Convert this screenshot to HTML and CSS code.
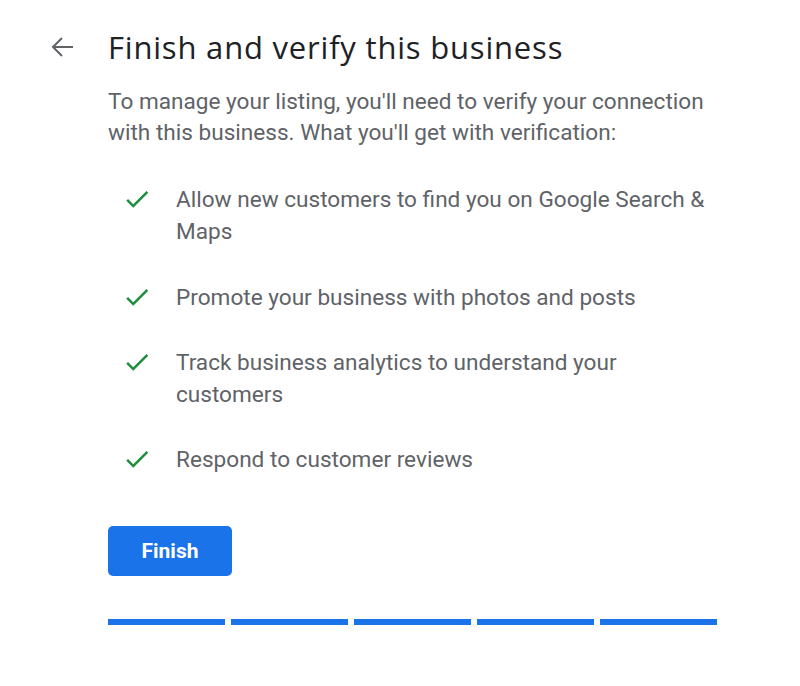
FILE: index.html
```html
<!DOCTYPE html>
<html>
<head>
<meta charset="utf-8">
<link rel="stylesheet" href="styles.css">
</head>
<body>
<div class="page">
  <div class="header">
    <svg class="back" width="24" height="22" viewBox="0 0 24 22"><path d="M22 11H2.5M11 2L2 11l9 9" fill="none" stroke="#5f6368" stroke-width="2"/></svg>
    <h1 class="title">Finish and verify this business</h1>
  </div>
  <div class="content">
    <p class="intro">To manage your listing, you'll need to verify your connection with this business. What you'll get with verification:</p>
    <ul class="benefits">
      <li class="benefit"><svg class="check" width="30" height="30" viewBox="0 0 24 24"><path d="M9 16.17L4.83 12l-1.42 1.41L9 19 21 7l-1.41-1.41z" fill="#1e8e3e"/></svg><span>Allow new customers to find you on Google Search &amp; Maps</span></li>
      <li class="benefit"><svg class="check" width="30" height="30" viewBox="0 0 24 24"><path d="M9 16.17L4.83 12l-1.42 1.41L9 19 21 7l-1.41-1.41z" fill="#1e8e3e"/></svg><span>Promote your business with photos and posts</span></li>
      <li class="benefit"><svg class="check" width="30" height="30" viewBox="0 0 24 24"><path d="M9 16.17L4.83 12l-1.42 1.41L9 19 21 7l-1.41-1.41z" fill="#1e8e3e"/></svg><span>Track business analytics to understand your customers</span></li>
      <li class="benefit"><svg class="check" width="30" height="30" viewBox="0 0 24 24"><path d="M9 16.17L4.83 12l-1.42 1.41L9 19 21 7l-1.41-1.41z" fill="#1e8e3e"/></svg><span>Respond to customer reviews</span></li>
    </ul>
    <button class="finish">Finish</button>
    <div class="progress">
      <div class="seg"></div><div class="seg"></div><div class="seg"></div><div class="seg"></div><div class="seg"></div>
    </div>
  </div>
</div>
</body>
</html>
```
FILE: styles.css
```css
html, body { margin: 0; padding: 0; background: #fff; }
body { font-family: Roboto, "Noto Sans", sans-serif; }
.page { padding: 28px 0 0 0; }
.header { display: flex; align-items: center; }
.back { margin-left: 51px; flex: none; }
.title { margin: 0 0 0 33px; font-family: "Open Sans", Roboto, sans-serif; font-weight: 400; font-size: 31px; line-height: 38px; color: #202124; letter-spacing: 0.8px; white-space: nowrap; }
.content { margin-left: 108px; width: 612px; }
.intro { margin: 20px 0 0 0; font-size: 22.6px; line-height: 31px; color: #5f6368; }
.benefits { list-style: none; margin: 36px 0 0 0; padding: 0; }
.benefit { display: flex; align-items: flex-start; color: #5f6368; font-size: 22.6px; line-height: 32px; margin-bottom: 33px; }
.benefit:first-child { margin-bottom: 34px; }
.benefit:last-child { margin-bottom: 0; }
.benefit .check { flex: none; margin: 0 24px 0 14px; }
.benefit span { flex: 1; }
.finish { display: block; margin-top: 50px; width: 124px; height: 50px; border: none; border-radius: 5px; background: #1a73e8; color: #fff; font-family: Roboto, sans-serif; font-weight: 700; font-size: 21px; padding: 0; }
.progress { display: flex; gap: 6px; margin-top: 43px; width: 609px; }
.seg { flex: 1; height: 6px; background: #1a73e8; }
```
